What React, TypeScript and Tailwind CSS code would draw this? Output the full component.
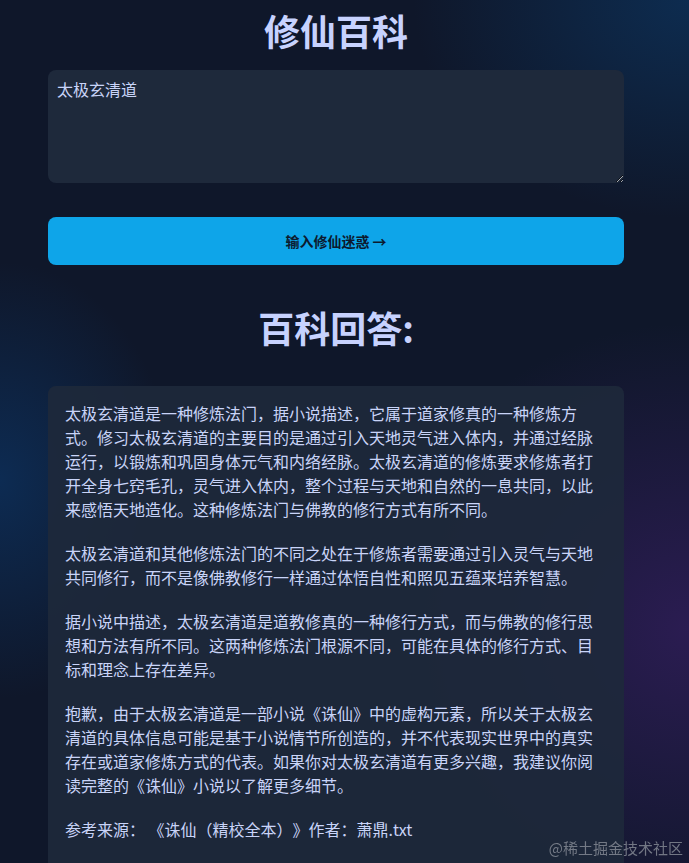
import React, { useState } from 'react';

const answer: string[] = [
  '太极玄清道是一种修炼法门，据小说描述，它属于道家修真的一种修炼方式。修习太极玄清道的主要目的是通过引入天地灵气进入体内，并通过经脉运行，以锻炼和巩固身体元气和内络经脉。太极玄清道的修炼要求修炼者打开全身七窍毛孔，灵气进入体内，整个过程与天地和自然的一息共同，以此来感悟天地造化。这种修炼法门与佛教的修行方式有所不同。',
  '太极玄清道和其他修炼法门的不同之处在于修炼者需要通过引入灵气与天地共同修行，而不是像佛教修行一样通过体悟自性和照见五蕴来培养智慧。',
  '据小说中描述，太极玄清道是道教修真的一种修行方式，而与佛教的修行思想和方法有所不同。这两种修炼法门根源不同，可能在具体的修行方式、目标和理念上存在差异。',
  '抱歉，由于太极玄清道是一部小说《诛仙》中的虚构元素，所以关于太极玄清道的具体信息可能是基于小说情节所创造的，并不代表现实世界中的真实存在或道家修炼方式的代表。如果你对太极玄清道有更多兴趣，我建议你阅读完整的《诛仙》小说以了解更多细节。',
];

const App: React.FC = () => {
  const [question, setQuestion] = useState<string>('太极玄清道');

  return (
    <div className="relative min-h-screen bg-[#0f172a] bg-[radial-gradient(ellipse_40%_25%_at_100%_0%,rgba(12,58,105,0.6),transparent),radial-gradient(ellipse_45%_35%_at_100%_72%,rgba(52,30,95,0.75),transparent),radial-gradient(ellipse_25%_25%_at_0%_55%,rgba(12,52,100,0.7),transparent)] font-['Noto_Sans_CJK_SC','Noto_Sans',sans-serif] text-[#c9d4f8]">
      <div className="ml-12 w-[576px] pt-[10px]">
        <h1 className="text-center text-4xl font-bold text-[#c7d2fe]">修仙百科</h1>

        <textarea
          value={question}
          onChange={(e) => setQuestion(e.target.value)}
          className="mt-5 block h-[113px] w-full rounded-lg bg-[#1e293b] px-[9px] pt-[7px] pb-[9px] text-base leading-6 text-[#c9d4f8] outline-none"
        />

        <button
          type="button"
          className="mt-[34px] flex h-12 w-full items-center justify-center rounded-lg bg-[#0ea5e9] text-sm font-bold text-[#0c1a2e]"
        >
          输入修仙迷惑 →
        </button>

        <h2 className="mt-[42px] text-center text-4xl font-bold text-[#c7d2fe]">百科回答:</h2>

        <div className="mt-[39px] rounded-lg bg-[#1e293b]/90 pt-[15px] pb-8 pl-[17px] pr-6">
          {answer.map((p, i) => (
            <p key={i} className={i === 0 ? 'text-base leading-6' : 'mt-5 text-base leading-6'}>
              {p}
            </p>
          ))}
          <p className="mt-5 text-base leading-6 [text-spacing-trim:space-all]">参考来源： 《诛仙（精校全本）》作者：萧鼎.txt</p>
        </div>
      </div>

      <div className="fixed right-[6px] bottom-[4px] text-[15px] text-[#8a8f99]/80">@稀土掘金技术社区</div>
    </div>
  );
};

export default App;
